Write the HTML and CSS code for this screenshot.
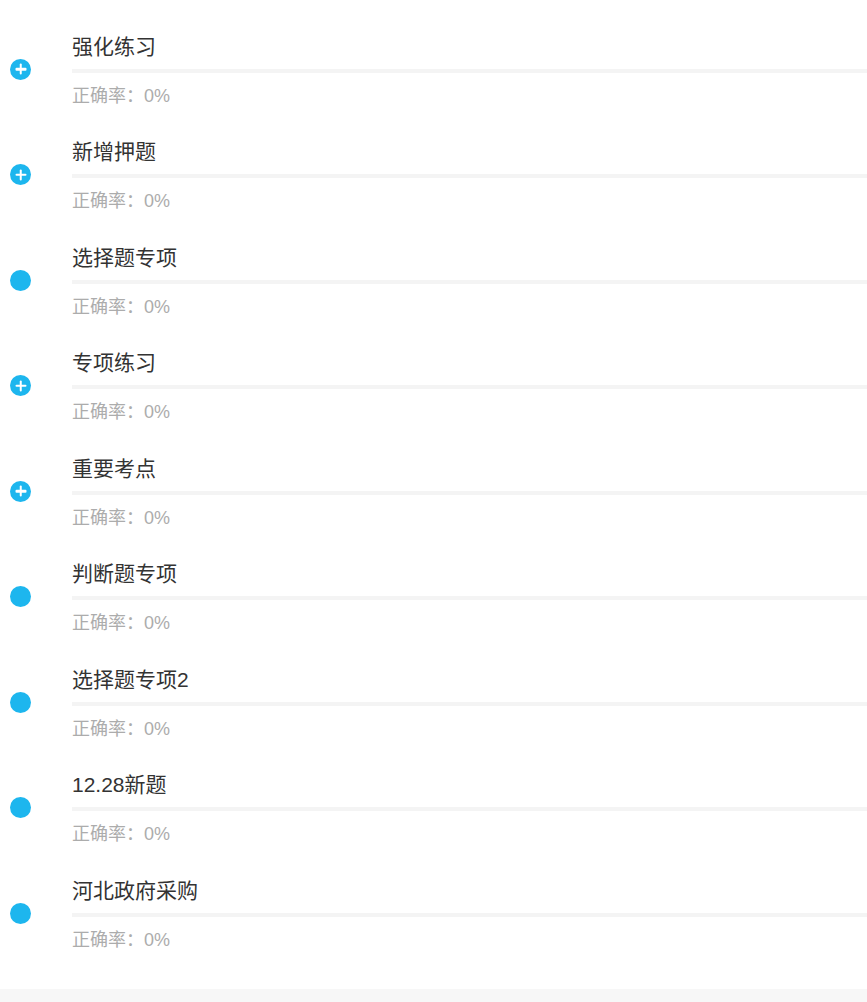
FILE: index.html
```html
<!DOCTYPE html>
<html lang="zh-CN">
<head>
<meta charset="utf-8">
<link rel="stylesheet" href="styles.css">
</head>
<body>
<div class="list">
  <div class="item">
    <div class="icon-col"><span class="dot plus"></span></div>
    <div class="content"><div class="title">强化练习</div><div class="bar"></div><div class="acc">正确率：0%</div></div>
  </div>
  <div class="item">
    <div class="icon-col"><span class="dot plus"></span></div>
    <div class="content"><div class="title">新增押题</div><div class="bar"></div><div class="acc">正确率：0%</div></div>
  </div>
  <div class="item">
    <div class="icon-col"><span class="dot"></span></div>
    <div class="content"><div class="title">选择题专项</div><div class="bar"></div><div class="acc">正确率：0%</div></div>
  </div>
  <div class="item">
    <div class="icon-col"><span class="dot plus"></span></div>
    <div class="content"><div class="title">专项练习</div><div class="bar"></div><div class="acc">正确率：0%</div></div>
  </div>
  <div class="item">
    <div class="icon-col"><span class="dot plus"></span></div>
    <div class="content"><div class="title">重要考点</div><div class="bar"></div><div class="acc">正确率：0%</div></div>
  </div>
  <div class="item">
    <div class="icon-col"><span class="dot"></span></div>
    <div class="content"><div class="title">判断题专项</div><div class="bar"></div><div class="acc">正确率：0%</div></div>
  </div>
  <div class="item">
    <div class="icon-col"><span class="dot"></span></div>
    <div class="content"><div class="title">选择题专项2</div><div class="bar"></div><div class="acc">正确率：0%</div></div>
  </div>
  <div class="item">
    <div class="icon-col"><span class="dot"></span></div>
    <div class="content"><div class="title">12.28新题</div><div class="bar"></div><div class="acc">正确率：0%</div></div>
  </div>
  <div class="item">
    <div class="icon-col"><span class="dot"></span></div>
    <div class="content"><div class="title">河北政府采购</div><div class="bar"></div><div class="acc">正确率：0%</div></div>
  </div>
</div>
<div class="footer"></div>
</body>
</html>
```
FILE: styles.css
```css
html, body {
  margin: 0;
  padding: 0;
  background: #ffffff;
  font-family: "Liberation Sans", "Noto Sans CJK SC", sans-serif;
}
.list {
  padding: 17.25px 0 22.5px 0;
}
.item {
  display: flex;
  align-items: center;
  padding: 16.25px 0;
}
.icon-col {
  width: 72px;
  flex: none;
  display: flex;
  padding-left: 10px;
  box-sizing: border-box;
  margin-top: -2px;
}
.dot {
  width: 21px;
  height: 21px;
  border-radius: 50%;
  background: #1db6ee;
  position: relative;
  display: block;
}
.dot.plus::before,
.dot.plus::after {
  content: "";
  position: absolute;
  background: #ffffff;
  left: 50%;
  top: 50%;
  transform: translate(-50%, -50%);
  border-radius: 1px;
}
.dot.plus::before {
  width: 11px;
  height: 2.5px;
}
.dot.plus::after {
  width: 2.5px;
  height: 11px;
}
.content {
  flex: 1;
}
.title {
  font-size: 21px;
  line-height: 26px;
  color: #333333;
}
.bar {
  height: 4px;
  background: #f4f4f4;
  margin-top: 9px;
}
.acc {
  margin-top: 12px;
  font-size: 18px;
  line-height: 22px;
  color: #acacac;
}
.footer {
  height: 40px;
  background: #f7f7f7;
}
```
